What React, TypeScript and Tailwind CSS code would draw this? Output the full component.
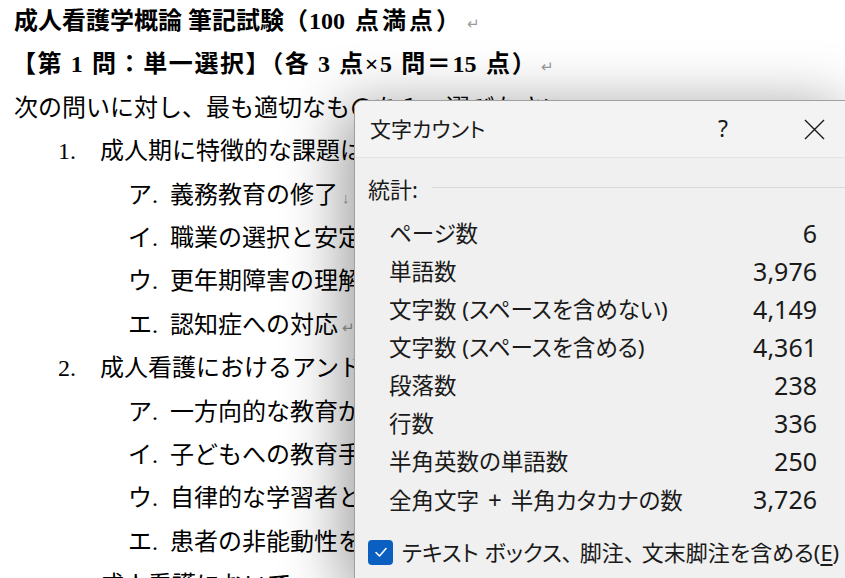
import React from "react";

const Para = ({ children }: { children: React.ReactNode }) => (
  <span className="text-[15px] leading-none text-[#9a9a9a] font-normal tracking-normal ml-[4px]">{children}</span>
);

function Item({ indent, label, text, mark }: { indent: string; label: string; text: string; mark: string }) {
  return (
    <div className={`flex whitespace-nowrap h-[43.4px] ${indent}`}>
      <span className="w-[42px] shrink-0">{label}</span>
      <span>
        {text}
        <Para>{mark}</Para>
      </span>
    </div>
  );
}

export default function App() {
  const rows: [React.ReactNode, string][] = [
    ["ページ数", "6"],
    ["単語数", "3,976"],
    ["文字数 (スペースを含めない)", "4,149"],
    ["文字数 (スペースを含める)", "4,361"],
    ["段落数", "238"],
    ["行数", "336"],
    ["半角英数の単語数", "250"],
    [
      <>
        全角文字<span className="mx-[9px] text-[24px]">+</span>半角カタカナの数
      </>,
      "3,726",
    ],
  ];
  return (
    <div className="relative w-[845px] h-[578px] overflow-hidden bg-white">
      <div
        className="pl-[14px] text-[24px] leading-[43.4px] text-black"
        style={{ fontFamily: '"Liberation Serif", "Noto Sans CJK JP", serif' }}
      >
        <div className="font-bold whitespace-nowrap h-[43.4px]">
          成人看護学概論 筆記試験（<span className="ml-[1px] mr-[4px]">100</span> <span className="tracking-[3px]">点満点）</span>
          <Para>↵</Para>
        </div>
        <div className="font-bold whitespace-nowrap -ml-[2px] h-[43.4px] tracking-[1.6px]">
          【第 1 問：単一選択】（各 3 点×5 問＝<span className="tracking-normal mr-[2px]">15</span> 点）<Para>↵</Para>
        </div>
        <div className="whitespace-nowrap h-[43.4px]">
          次の問いに対し、最も適切なものを１つ選びなさい。<Para>↵</Para>
        </div>
        <Item indent="ml-[44px]" label="1." text="成人期に特徴的な課題はどれか。" mark="↵" />
        <Item indent="ml-[114px]" label="ア." text="義務教育の修了" mark="↓" />
        <Item indent="ml-[114px]" label="イ." text="職業の選択と安定" mark="↓" />
        <Item indent="ml-[114px]" label="ウ." text="更年期障害の理解" mark="↓" />
        <Item indent="ml-[114px]" label="エ." text="認知症への対応" mark="↵" />
        <Item indent="ml-[44px]" label="2." text="成人看護におけるアンドラゴジーの特徴はどれか。" mark="↵" />
        <Item indent="ml-[114px]" label="ア." text="一方向的な教育が中心となる" mark="↓" />
        <Item indent="ml-[114px]" label="イ." text="子どもへの教育手法を用いる" mark="↓" />
        <Item indent="ml-[114px]" label="ウ." text="自律的な学習者として捉える" mark="↓" />
        <Item indent="ml-[114px]" label="エ." text="患者の非能動性を前提とする" mark="↵" />
        <Item indent="ml-[44px]" label="3." text="成人看護において、QOLの向上を" mark="↵" />
      </div>

      <div
        className="absolute left-[354px] top-[100px] w-[500px] h-[490px] rounded-tl-[8px] border border-[#a0a0a0] bg-[#f0f0f0] shadow-[-12px_6px_60px_rgba(0,0,0,0.38)] text-[#1a1a1a] [font-feature-settings:'palt']"
        style={{ fontFamily: '"Noto Sans", "Noto Sans CJK JP", sans-serif' }}
      >
        <div className="flex items-center h-[57px] bg-[#f3f3f3] border-b border-[#e3e3e3] rounded-tl-[8px] pl-[15px] pr-[16px]">
          <span className="flex-1 text-[21px] leading-[30px]">文字カウント</span>
          <span className="w-[44px] text-center text-[23px] leading-[30px] -mt-[3px]">?</span>
          <span className="w-[46px] ml-[46px] flex justify-center">
            <svg width="21" height="21" viewBox="0 0 21 21">
              <path d="M1 1 L20 20 M20 1 L1 20" stroke="#1a1a1a" strokeWidth="1.4" fill="none" />
            </svg>
          </span>
        </div>
        <div className="flex items-center pt-[16px] pl-[13px] h-[46px]">
          <span className="text-[22px] leading-[30px]">統計:</span>
          <div className="flex-1 h-px bg-[#d9d9d9] ml-[14px] -mt-[3px]" />
        </div>
        <div className="mt-[11px] pl-[34px] pr-[36px] text-[22.5px]">
          {rows.map(([k, v], i) => (
            <div key={i} className="flex justify-between items-center h-[38px] whitespace-nowrap">
              <span>{k}</span>
              <span className="text-[25px]">{v}</span>
            </div>
          ))}
        </div>
        <div className="flex items-center mt-[18px] pl-[13px] h-[30px] whitespace-nowrap">
          <div className="w-[25px] h-[25px] rounded-[4px] bg-[#0b5fc1] flex items-center justify-center shrink-0">
            <svg width="16" height="16" viewBox="0 0 16 16">
              <path d="M3 8.5 L6.5 12 L13 4.5" stroke="white" strokeWidth="1.6" fill="none" strokeLinecap="round" strokeLinejoin="round" />
            </svg>
          </div>
          <span className="ml-[9px] text-[22px] leading-[30px]">
            テキスト ボックス<span className="mr-[7px]">、</span>脚注<span className="mr-[7px]">、</span>文末脚注を含める(<span className="underline underline-offset-[3px]">E</span>)
          </span>
        </div>
      </div>
    </div>
  );
}
